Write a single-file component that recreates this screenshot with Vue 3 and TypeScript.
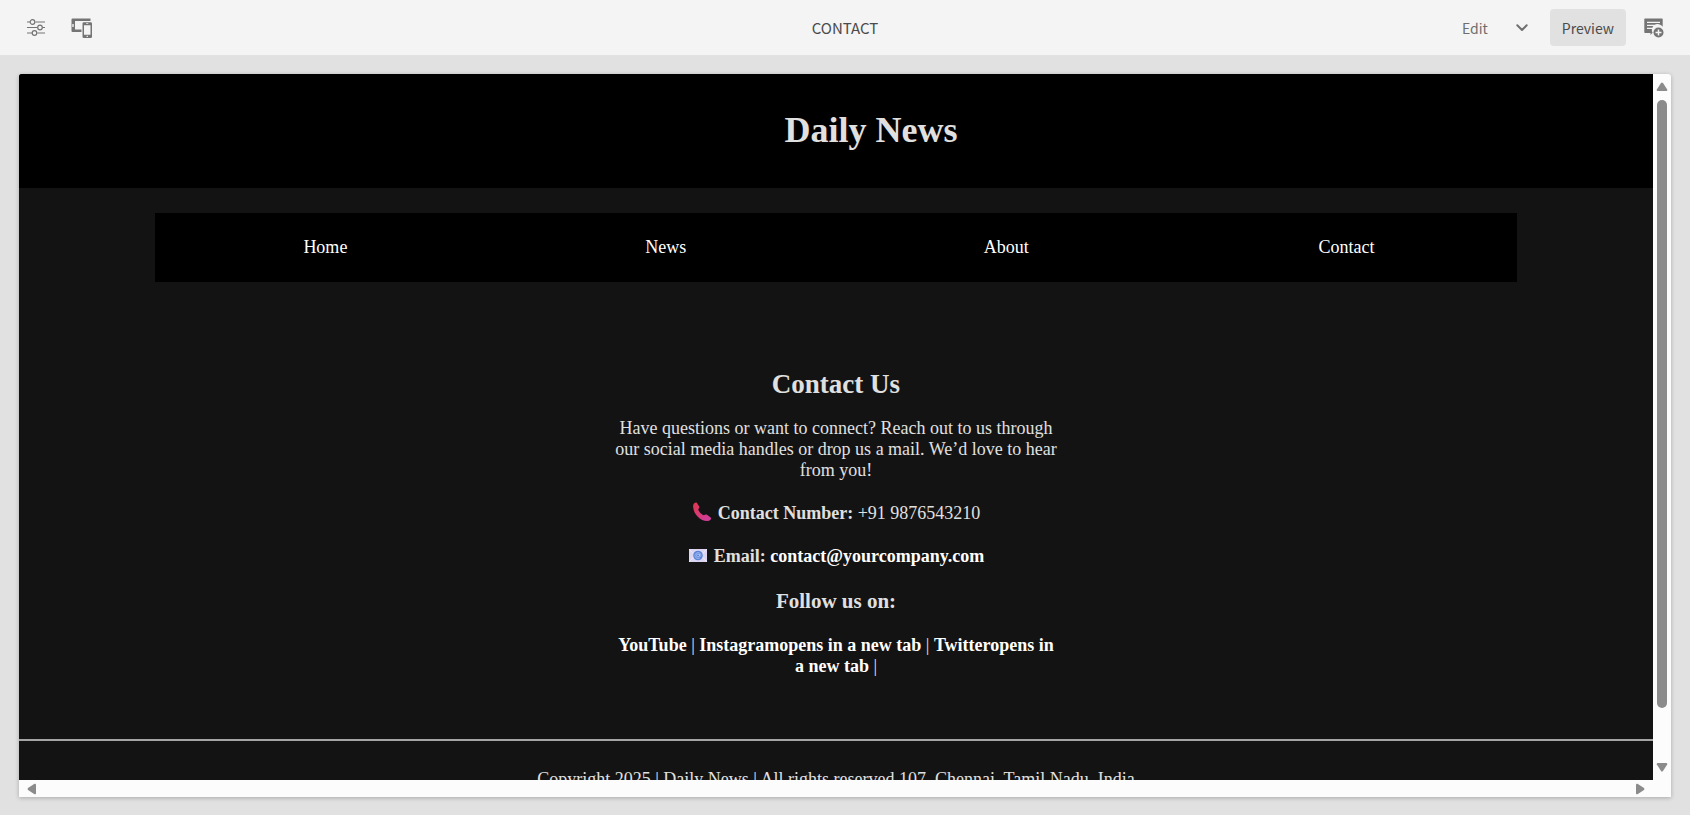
<script setup lang="ts">
interface PageLink {
  label: string
  href: string
}

const navLinks: PageLink[] = [
  { label: 'Home', href: '#home' },
  { label: 'News', href: '#news' },
  { label: 'About', href: '#about' },
  { label: 'Contact', href: '#contact' },
]

const socialLinks: PageLink[] = [
  { label: 'YouTube', href: '#youtube' },
  { label: 'Instagramopens in a new tab', href: '#instagram' },
  { label: 'Twitteropens in a new tab', href: '#twitter' },
]
</script>

<template>
  <div class="editor">
    <header class="toolbar">
      <div class="side">
        <button class="icon-button" type="button" aria-label="Page properties">
          <svg width="20" height="20" viewBox="0 0 20 20" fill="none" stroke="#747474" stroke-width="1.2">
            <path d="M1 4h3.6M9.4 4H19M1 9.5h10.6M16.4 9.5H19M1 15h5.6M11.4 15H19" />
            <circle cx="6.5" cy="4" r="2.3" />
            <circle cx="14" cy="9.5" r="2.3" />
            <circle cx="8.5" cy="15" r="2.3" />
          </svg>
        </button>
        <button class="icon-button" type="button" aria-label="Emulator">
          <svg width="22" height="20" viewBox="0 0 22 20">
            <path fill="#747474" fill-rule="evenodd" d="M1.500 .5H19.500V3H4V11.500H10.500V14H1.500Q.5 14 .5 13V1.500Q.5 .5 1.500 .5ZM1.300 6V9H2.700V6Z" />
            <path fill="#747474" fill-rule="evenodd" d="M12.800 4.200H19.700Q21 4.200 21 5.500V18.700Q21 20 19.700 20H12.800Q11.500 20 11.500 18.700V5.500Q11.500 4.200 12.800 4.200ZM13 7.200V16.700H19.500V7.200ZM15.200 5.200V6H17.300V5.200ZM15.600 17.700V19H16.900V17.700Z" />
          </svg>
        </button>
      </div>
      <div class="title">CONTACT</div>
      <div class="side end">
        <button class="mode" type="button">Edit</button>
        <button class="chevron" type="button" aria-label="Choose mode">
          <svg width="12" height="8" viewBox="0 0 12 8" fill="none" stroke="#707070" stroke-width="2" stroke-linecap="round" stroke-linejoin="round">
            <path d="M1.300 1.300L6 6L10.700 1.300" />
          </svg>
        </button>
        <button class="mode active" type="button">Preview</button>
        <button class="icon-button note" type="button" aria-label="Add annotation">
          <svg width="20" height="20" viewBox="0 0 20 20">
            <path fill="#747474" d="M1 .5H18Q18.700 .5 18.700 1.200V8.800A5.700 5.700 0 0 0 8.700 15H8.300L6.500 17V15H1Q.3 15 .3 14.300V1.200Q.3 .5 1 .5Z" />
            <path stroke="#f4f4f4" stroke-width="1.300" d="M3 4.300H16M3 7.300H13M3 10.300H8.500" />
            <circle cx="14.500" cy="14.500" r="5" fill="#747474" />
            <path stroke="#f4f4f4" stroke-width="1.500" d="M11.500 14.500H17.500M14.500 11.500V17.500" />
          </svg>
        </button>
      </div>
    </header>

    <main class="stage">
      <div class="frame">
        <div class="site">
          <header class="masthead">
            <h1>Daily News</h1>
          </header>
          <nav class="nav">
            <a v-for="link in navLinks" :key="link.label" :href="link.href">{{ link.label }}</a>
          </nav>
          <section class="contact">
            <h2>Contact Us</h2>
            <p>
              Have questions or want to connect? Reach out to us through our social media handles or
              drop us a mail. We’d love to hear from you!
            </p>
            <p>
              <svg class="emoji" width="20" height="20" viewBox="0 0 20 20" aria-hidden="true">
                <defs>
                  <linearGradient id="handset" x1="0" y1="0" x2="1" y2="1">
                    <stop offset="0" stop-color="#e0364c" />
                    <stop offset="1" stop-color="#cf3fa4" />
                  </linearGradient>
                </defs>
                <path fill="url(#handset)" d="M1.200 3C1.600 1.200 3.600 0 4.800 .8L7.200 4.500C7.700 5.500 7.200 6.400 6.200 7.300C6.600 9.500 9.800 13 12 13.300C13 12.300 14 12.200 15 12.700L18.700 15.500C19.600 16.500 18.700 18.100 16.700 18.800C9 20.300 .2 11.500 1.200 3Z" />
              </svg>
              <strong>Contact Number:</strong> +91 9876543210
            </p>
            <p>
              <svg class="emoji" width="20" height="20" viewBox="0 0 20 20" aria-hidden="true">
                <rect x="1" y="4" width="18" height="13" fill="#dcd5f1" />
                <path d="M1 4L7 10.500L1 17M19 4L13 10.500L19 17" fill="none" stroke="#eee9fb" />
                <circle cx="10" cy="10.500" r="4.800" fill="#5b83d8" />
                <circle cx="10" cy="10.500" r="1.500" fill="none" stroke="#b9cef8" stroke-width=".8" />
                <path d="M11.600 9V11Q12.400 12.400 13 10.500A3 3 0 1 0 11.800 13" fill="none" stroke="#b9cef8" stroke-width=".7" />
              </svg>
              <strong>Email: <a href="mailto:contact@yourcompany.com">contact@yourcompany.com</a></strong>
            </p>
            <h3>Follow us on:</h3>
            <p>
              <template v-for="link in socialLinks" :key="link.label">
                <a :href="link.href">{{ link.label }}</a> |{{ ' ' }}
              </template>
            </p>
          </section>
          <footer class="footer">
            Copyright 2025 | Daily News | All rights reserved 107, Chennai, Tamil Nadu, India
          </footer>
        </div>

        <div class="bar vertical" aria-hidden="true">
          <svg width="12" height="10" viewBox="0 0 12 10"><path fill="#8b8b8b" d="M5 1Q6 0 7 1L11.200 7.500Q11.500 9 10.500 9H1.500Q.5 9 .8 7.500Z" /></svg>
          <div class="track"><div class="thumb"></div></div>
          <svg width="12" height="10" viewBox="0 0 12 10"><path fill="#8b8b8b" d="M5 9Q6 10 7 9L11.200 2.500Q11.500 1 10.500 1H1.500Q.5 1 .8 2.500Z" /></svg>
        </div>
        <div class="bar horizontal" aria-hidden="true">
          <svg width="10" height="12" viewBox="0 0 10 12"><path fill="#8b8b8b" d="M1 5Q0 6 1 7L7.500 11.200Q9 11.500 9 10.500V1.500Q9 .5 7.500 .8Z" /></svg>
          <svg width="10" height="12" viewBox="0 0 10 12"><path fill="#8b8b8b" d="M9 5Q10 6 9 7L2.500 11.200Q1 11.500 1 10.500V1.500Q1 .5 2.500 .8Z" /></svg>
        </div>
      </div>
    </main>
  </div>
</template>

<style>
body {
  margin: 0;
}
</style>

<style scoped>
.editor {
  box-sizing: border-box;
  display: flex;
  flex-direction: column;
  height: 100vh;
  background: #e1e1e1;
}

.toolbar {
  display: grid;
  grid-template-columns: 1fr auto 1fr;
  align-items: center;
  flex: none;
  height: 55px;
  padding: 0 23px;
  background: #f4f4f4;
  color: #4b4b4b;
  font: 14px/20px "Noto Sans CJK SC", "Open Sans", sans-serif;
}

.title {
  font-size: 15px;
}

.side {
  display: flex;
  align-items: center;
  gap: 20px;
}

.end {
  justify-content: flex-end;
  gap: 12px;
}

button {
  margin: 0;
  padding: 0;
  border: 0;
  background: none;
  color: inherit;
  font: inherit;
  cursor: pointer;
}

.icon-button {
  display: flex;
  justify-content: center;
  width: 26px;
}

.mode {
  height: 37px;
  padding: 0 12px;
  border-radius: 4px;
  color: #6e6e6e;
}

.active {
  background: #e1e1e1;
  color: #4b4b4b;
}

.chevron {
  display: flex;
  justify-content: center;
  width: 20px;
  margin-right: 6px;
}

.note {
  margin-left: 3px;
}

.stage {
  flex: 1;
  display: flex;
  min-height: 0;
  padding: 19px 19px 18px;
}

.frame {
  flex: 1;
  display: grid;
  grid-template: minmax(0, 1fr) 17px / minmax(0, 1fr) 18px;
  border-radius: 3px 3px 0 0;
  background: #fcfcfc;
  box-shadow: 0 1px 4px rgba(0, 0, 0, 0.25);
  overflow: hidden;
}

.site {
  overflow: hidden;
  background: #131313;
  color: #e0e0e0;
  font: 18px/21px "Liberation Serif", "Times New Roman", serif;
  text-align: center;
}

.masthead {
  padding: 35px 0 37px 70px;
  background: #000;
}

h1 {
  margin: 0;
  font-size: 36px;
  line-height: 42px;
}

.nav {
  display: grid;
  grid-template-columns: repeat(4, 1fr);
  width: 83.33%;
  margin: 25px auto 0;
  background: #000;
}

.nav a {
  padding: 24px 0;
  color: #fff;
}

a {
  color: #fff;
  text-decoration: none;
}

.contact {
  width: 27.3%;
  margin: 0 auto;
  padding: 87px 0 40px;
}

.contact a {
  font-weight: bold;
}

h2 {
  margin: 0 0 18px;
  font-size: 27px;
  line-height: 31px;
}

p {
  margin: 0 0 22px;
}

h3 {
  margin: 0 0 22px;
  font-size: 21px;
  line-height: 24px;
}

.emoji {
  margin: -4px 6px -3px 0;
  vertical-align: baseline;
}

.footer {
  padding-top: 28px;
  border-top: 2px solid #a5a5a5;
}

.bar {
  display: flex;
  align-items: center;
  justify-content: space-between;
}

.vertical {
  flex-direction: column;
  padding: 8px 0;
}

.horizontal {
  grid-row: 2;
  padding: 0 8px;
}

.track {
  flex: 1;
  width: 10px;
  margin: 8px 0;
}

.thumb {
  height: 93%;
  border-radius: 5px;
  background: #8b8b8b;
}
</style>
